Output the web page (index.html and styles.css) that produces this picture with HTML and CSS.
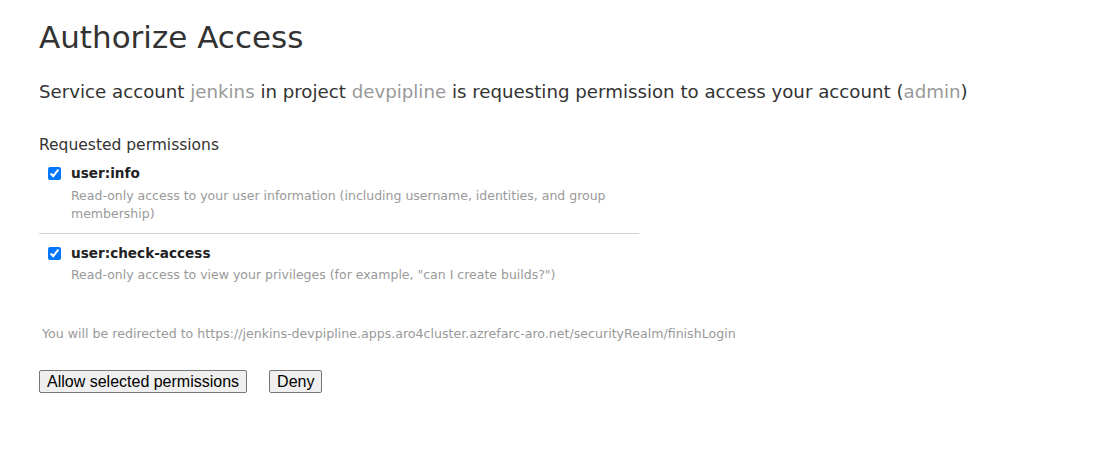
FILE: index.html
```html
<!DOCTYPE html>
<html>
<head>
<meta charset="utf-8">
<link rel="stylesheet" href="styles.css">
</head>
<body>
<main class="page">
  <h1 class="title">Authorize Access</h1>
  <p class="lead">Service account <span class="muted">jenkins</span> in project <span class="muted">devpipline</span> is requesting permission to access your account (<span class="muted">admin</span>)</p>
  <form class="grant">
    <h2 class="section">Requested permissions</h2>
    <div class="perms">
      <label class="perm">
        <input type="checkbox" class="check" checked>
        <span class="perm-body">
          <span class="perm-name">user:info</span>
          <span class="perm-desc">Read-only access to your user information (including username, identities, and group membership)</span>
        </span>
      </label>
      <label class="perm perm-sep">
        <input type="checkbox" class="check" checked>
        <span class="perm-body">
          <span class="perm-name">user:check-access</span>
          <span class="perm-desc">Read-only access to view your privileges (for example, "can I create builds?")</span>
        </span>
      </label>
    </div>
    <p class="redirect">You will be redirected to https://jenkins-devpipline.apps.aro4cluster.azrefarc-aro.net/securityRealm/finishLogin</p>
    <div class="actions">
      <button type="button" class="btn">Allow selected permissions</button>
      <button type="button" class="btn">Deny</button>
    </div>
  </form>
</main>
</body>
</html>
```
FILE: styles.css
```css
html, body {
  margin: 0;
  padding: 0;
  background: #ffffff;
}
body {
  font-family: "DejaVu Sans", Verdana, sans-serif;
  color: #333333;
}
.page {
  padding: 19px 0 0 39px;
}
.title {
  font-size: 31px;
  font-weight: normal;
  line-height: 36px;
  margin: 0;
  color: #333333;
}
.lead {
  font-size: 18.2px;
  line-height: 24px;
  margin: 25px 0 0 0;
}
.muted {
  color: #999999;
}
.grant {
  margin: 0;
}
.section {
  font-size: 15.5px;
  font-weight: normal;
  line-height: 20px;
  margin: 31px 0 0 0;
}
.perms {
  width: 600px;
  margin-top: 9px;
}
.perm {
  display: flex;
  align-items: flex-start;
  gap: 10px;
  padding: 0 0 10px 9px;
}
.perm-sep {
  border-top: 1px solid #d1d1d1;
  padding-top: 10px;
}
.check {
  margin: 3px 0 0 0;
  width: 13px;
  height: 13px;
  accent-color: #0075ff;
}
.perm-body {
  display: flex;
  flex-direction: column;
}
.perm-name {
  font-weight: bold;
  font-size: 13.6px;
  line-height: 18px;
  color: #222222;
}
.perm-desc {
  font-size: 12.5px;
  line-height: 18px;
  color: #999999;
  margin-top: 4px;
}
.perm:first-child .perm-desc {
  margin-top: 5px;
}
.redirect {
  font-size: 12.6px;
  line-height: 16px;
  color: #999999;
  margin: 32px 0 0 3px;
}
.actions {
  display: flex;
  gap: 22px;
  margin-top: 28px;
}
.btn {
  font-family: "Liberation Sans", Arial, sans-serif;
  font-size: 16px;
  line-height: 19px;
  padding: 1px 7px;
  background: #efefef;
  border: 1px solid #767676;
  border-radius: 2px;
  color: #000000;
}
```
